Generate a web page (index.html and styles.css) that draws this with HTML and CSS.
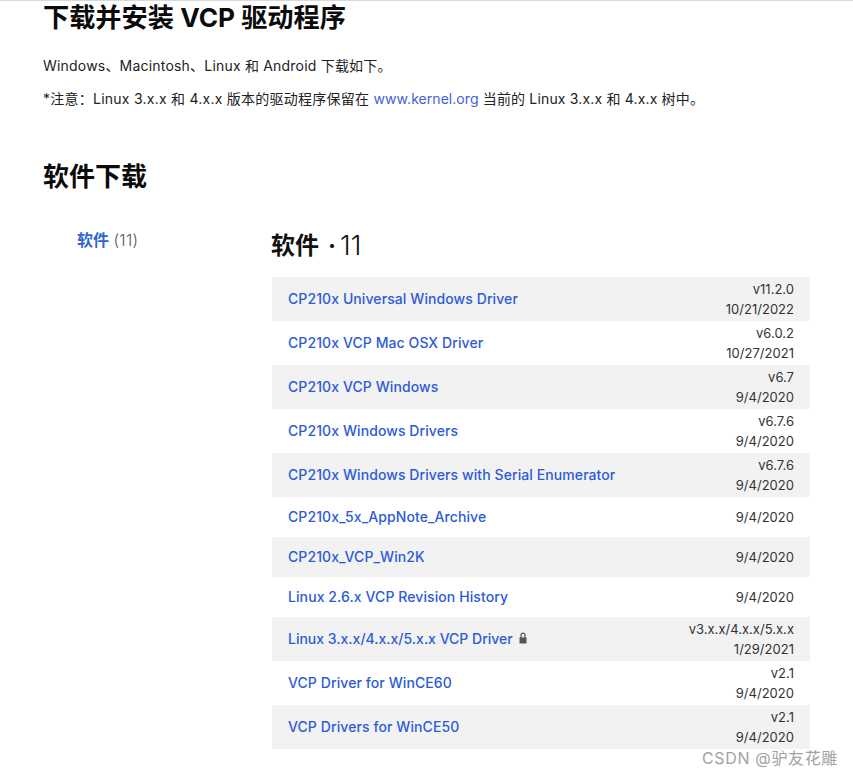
FILE: index.html
```html
<!DOCTYPE html>
<html lang="zh">
<head>
<meta charset="utf-8">
<title>下载并安装 VCP 驱动程序</title>
<link rel="stylesheet" href="styles.css">
</head>
<body>
<main class="page">
  <h1 class="title">下载并安装 VCP 驱动程序</h1>
  <p class="intro">Windows、Macintosh、Linux 和 Android 下载如下。</p>
  <p class="note">*注意：Linux 3.x.x 和 4.x.x 版本的驱动程序保留在 <a class="kernel" href="#">www.kernel.org</a> <span class="tail">当前的 Linux 3.x.x 和 4.x.x 树中。</span></p>
  <h2 class="section">软件下载</h2>
  <div class="columns">
    <nav class="side"><a class="side-link" href="#">软件</a> <span class="side-count">(11)</span></nav>
    <section class="results">
      <h3 class="results-head"><b>软件</b><span class="dot">·</span><span class="num">11</span></h3>
      <ul class="list">
        <li class="row"><a href="#">CP210x Universal Windows Driver</a><div class="meta"><div>v11.2.0</div><div>10/21/2022</div></div></li>
        <li class="row"><a href="#">CP210x VCP Mac OSX Driver</a><div class="meta"><div>v6.0.2</div><div>10/27/2021</div></div></li>
        <li class="row"><a href="#">CP210x VCP Windows</a><div class="meta"><div>v6.7</div><div>9/4/2020</div></div></li>
        <li class="row"><a href="#">CP210x Windows Drivers</a><div class="meta"><div>v6.7.6</div><div>9/4/2020</div></div></li>
        <li class="row"><a href="#">CP210x Windows Drivers with Serial Enumerator</a><div class="meta"><div>v6.7.6</div><div>9/4/2020</div></div></li>
        <li class="row short"><a href="#">CP210x_5x_AppNote_Archive</a><div class="meta"><div>9/4/2020</div></div></li>
        <li class="row short"><a href="#">CP210x_VCP_Win2K</a><div class="meta"><div>9/4/2020</div></div></li>
        <li class="row short"><a href="#">Linux 2.6.x VCP Revision History</a><div class="meta"><div>9/4/2020</div></div></li>
        <li class="row"><span class="locked"><a class="tight" href="#">Linux 3.x.x/4.x.x/5.x.x VCP Driver</a><svg class="lock" viewBox="0 0 8 12" width="8" height="12"><path d="M2 6V3.2a2 2 0 0 1 4 0V6" fill="none" stroke="#555" stroke-width="1.2"/><rect x="0.5" y="5.4" width="7" height="6.1" fill="#555"/></svg></span><div class="meta"><div>v3.x.x/4.x.x/5.x.x</div><div>1/29/2021</div></div></li>
        <li class="row"><a href="#">VCP Driver for WinCE60</a><div class="meta"><div>v2.1</div><div>9/4/2020</div></div></li>
        <li class="row"><a href="#">VCP Drivers for WinCE50</a><div class="meta"><div>v2.1</div><div>9/4/2020</div></div></li>
      </ul>
    </section>
  </div>
</main>
<div class="watermark">CSDN @驴友花雕</div>
</body>
</html>
```
FILE: styles.css
```css
* { box-sizing: border-box; }
html, body { margin: 0; padding: 0; }
body {
  height: 776px;
  overflow: hidden;
  position: relative;
  background: #fff;
  color: #222;
  font-family: Inter, "Noto Sans CJK SC", sans-serif;
  font-size: 14px;
  border-top: 1px solid #d9d9d9;
}
.page { padding: 0 43px; }
.title {
  margin: 0;
  height: 33px;
  font-size: 26.2px;
  line-height: 33px;
  font-weight: 700;
  color: #0b0b0b;
}
.intro, .note {
  margin: 0;
  font-size: 14px;
  line-height: 22px;
  letter-spacing: 0.2px;
  white-space: nowrap;
}
.intro { margin-top: 21px; }
.note { margin-top: 11px; letter-spacing: 0.25px; }
.kernel { color: #3f62d6; text-decoration: none; letter-spacing: 0.05px; }
.tail { letter-spacing: 0.17px; }
.section {
  margin: 49px 0 0;
  font-size: 26px;
  line-height: 36px;
  font-weight: 700;
  color: #0b0b0b;
}
.columns { display: flex; margin-top: 24px; }
.side {
  width: 229px;
  padding: 9px 0 0 34px;
  font-size: 16px;
  line-height: 24px;
}
.side-link { color: #2b65d9; font-weight: 700; text-decoration: none; }
.side-count { color: #555; font-weight: 300; letter-spacing: 0.25px; }
.results { width: 538px; }
.results-head {
  margin: 0;
  height: 46px;
  padding-top: 8px;
  font-size: 24px;
  line-height: 32px;
  font-weight: 400;
  color: #111;
  display: flex;
  align-items: center;
}
.results-head b { font-weight: 700; margin-left: -1px; }
.dot { font-weight: 700; margin: 0 4px 0 9px; }
.num { font-weight: 300; font-size: 27px; }
.list { margin: 12px 0 0; padding: 0; list-style: none; }
.row {
  height: 44px;
  padding: 0 16px;
  display: flex;
  align-items: center;
  justify-content: space-between;
}
.row.short { height: 40px; }
.row:nth-child(odd) { background: #f2f2f2; }
.row a {
  margin-bottom: 2px;
  color: #2d5bd8;
  font-size: 14px;
  font-weight: 500;
  letter-spacing: 0.09px;
  text-decoration: none;
}
.row a.tight { letter-spacing: 0; margin-right: -1px; }
.locked { display: flex; align-items: center; }
.lock { margin-left: 7px; margin-bottom: 2px; }
.meta {
  text-align: right;
  font-size: 13px;
  line-height: 20px;
  letter-spacing: 0.02px;
  color: #333;
}
.watermark {
  position: absolute;
  right: 15px;
  top: 746px;
  font-size: 16px;
  line-height: 22px;
  color: #a3a3a3;
  letter-spacing: 0.65px;
}
```
